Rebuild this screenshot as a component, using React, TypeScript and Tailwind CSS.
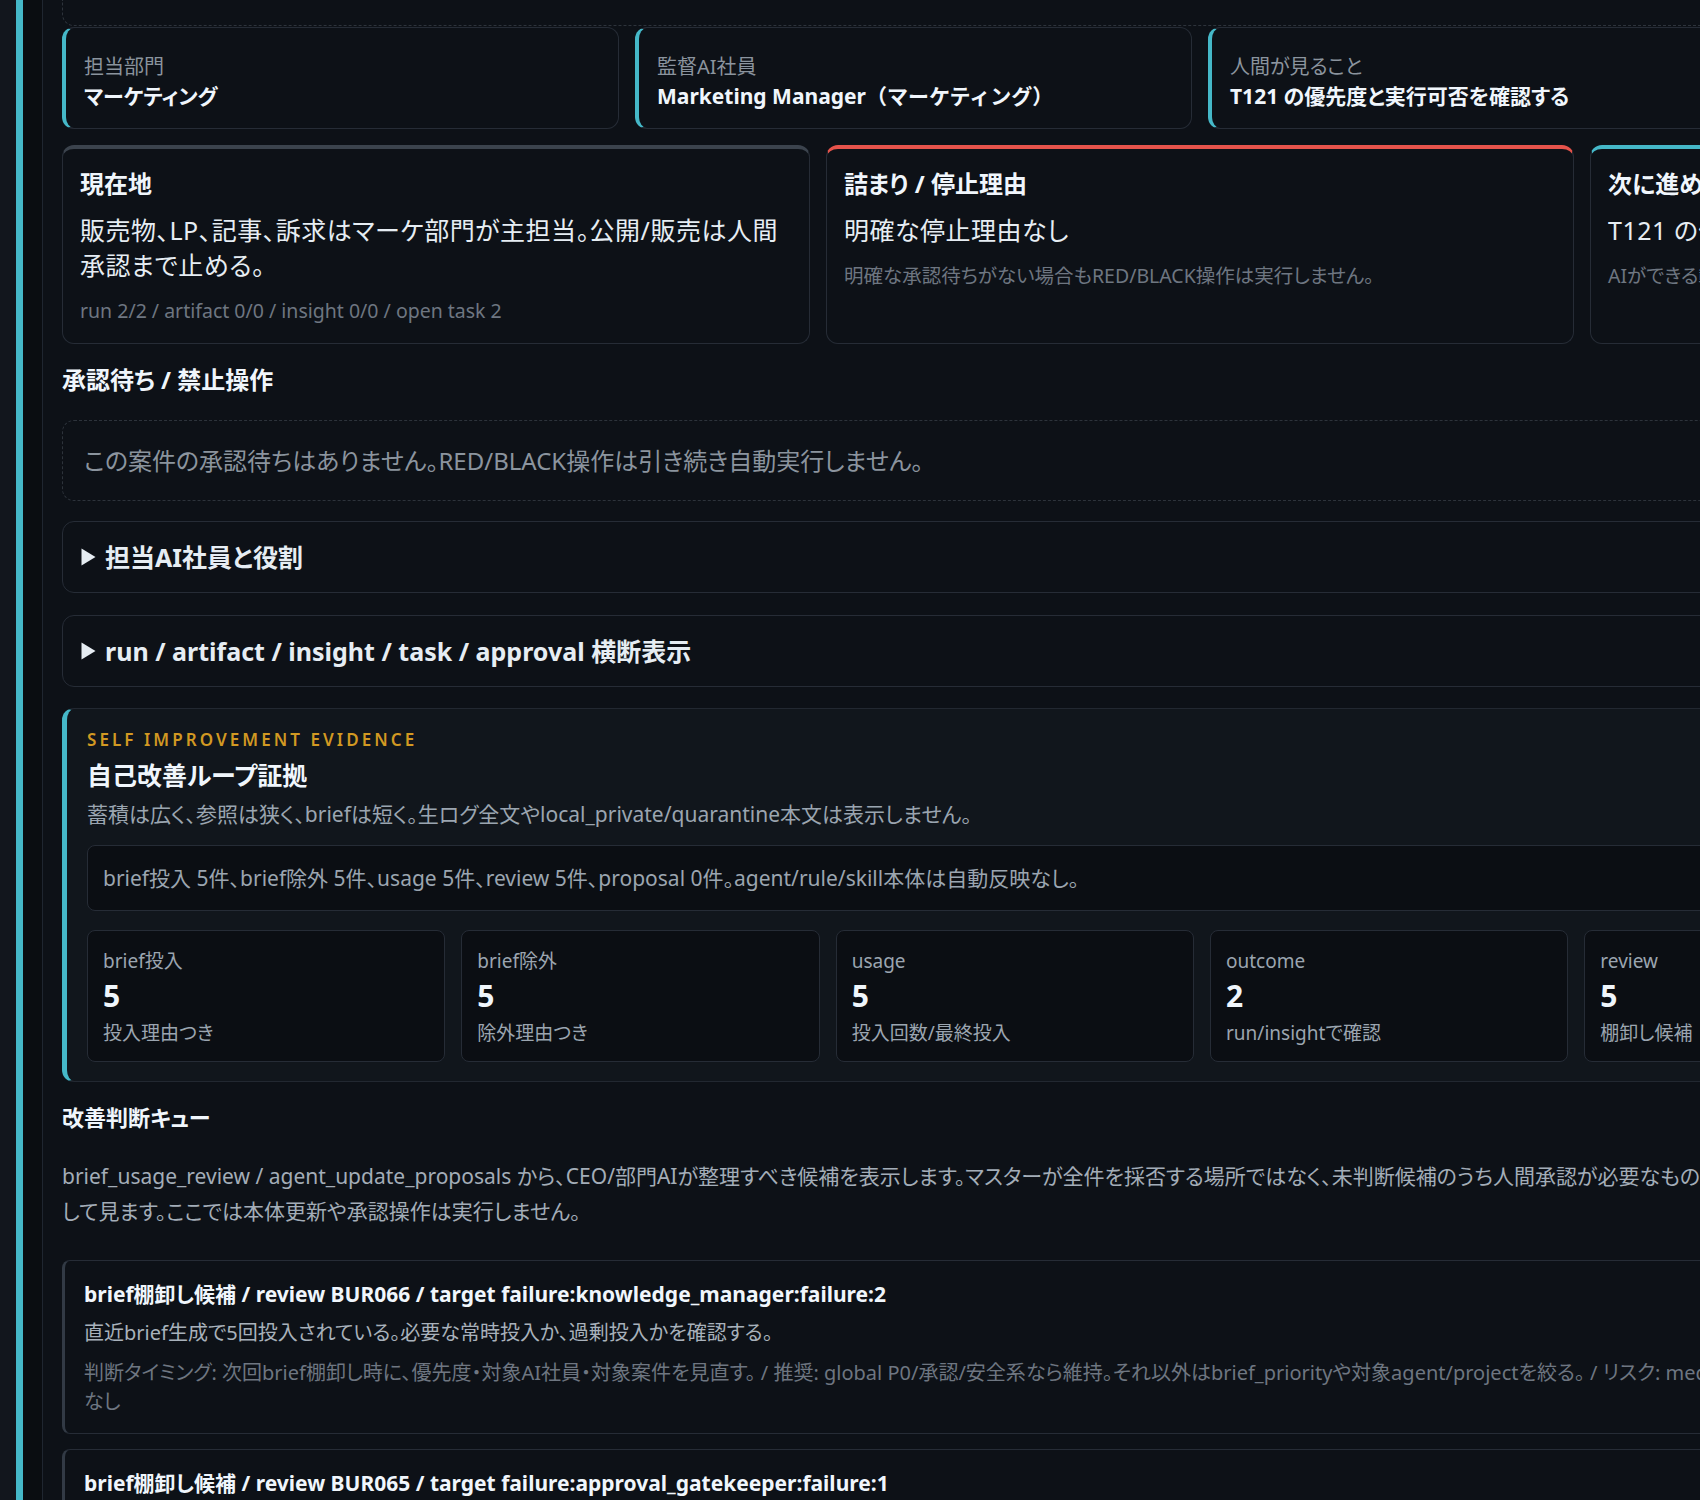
import React from 'react';

type Info = { label: string; value: React.ReactNode };
type Status = { title: string; body: string; meta: string; accent: string };
type Stat = { label: string; value: number; note: string };

const infos: Info[] = [
  { label: '担当部門', value: 'マーケティング' },
  {
    label: '監督AI社員',
    value: (
      <>
        Marketing Manager<span className="[font-feature-settings:normal]">（マーケティング）</span>
      </>
    ),
  },
  { label: '人間が見ること', value: 'T121 の優先度と実行可否を確認する' },
  { label: '次の一手', value: 'brief棚卸しの判断を待つ' },
];

const statuses: Status[] = [
  {
    title: '現在地',
    body: '販売物、LP、記事、訴求はマーケ部門が主担当。公開/販売は人間承認まで止める。',
    meta: 'run 2/2 / artifact 0/0 / insight 0/0 / open task 2',
    accent: 'border-t-[#3b434d]',
  },
  {
    title: '詰まり / 停止理由',
    body: '明確な停止理由なし',
    meta: '明確な承認待ちがない場合もRED/BLACK操作は実行しません。',
    accent: 'border-t-[#e5534b]',
  },
  {
    title: '次に進めるには',
    body: 'T121 の優先度と実行可否を確認する',
    meta: 'AIができる範囲で準備し、公開/販売は承認後に進めます。',
    accent: 'border-t-[#45b8c8]',
  },
];

const stats: Stat[] = [
  { label: 'brief投入', value: 5, note: '投入理由つき' },
  { label: 'brief除外', value: 5, note: '除外理由つき' },
  { label: 'usage', value: 5, note: '投入回数/最終投入' },
  { label: 'outcome', value: 2, note: 'run/insightで確認' },
  { label: 'review', value: 5, note: '棚卸し候補' },
  { label: 'proposal', value: 0, note: '更新提案' },
];

function Caret() {
  return (
    <svg width="15" height="18" viewBox="0 0 15 18" className="shrink-0">
      <polygon points="0.5,0.5 14.5,9 0.5,17.5" fill="#e6edf3" />
    </svg>
  );
}

function Fold({ title, className }: { title: string; className: string }) {
  return (
    <details className={`rounded-xl border border-[#262c36] bg-[#0d1117] ${className}`}>
      <summary className="flex cursor-pointer list-none items-center gap-[9px] px-[18px] py-[18px] text-[25px] font-bold leading-[34px] text-[#e6edf3] [&::-webkit-details-marker]:hidden">
        <Caret />
        <span>{title}</span>
      </summary>
    </details>
  );
}

function QueueItem({ review, target, meta, last }: { review: string; target: string; meta: React.ReactNode; last?: boolean }) {
  return (
    <div className={`rounded-lg border border-[#262c36] border-l-[3px] border-l-[#323a45] bg-[#0d1117] pb-[17px] pl-[19px] pr-5 pt-[18px] ${last ? 'mt-[15px]' : 'mt-[31px]'}`}>
      <div className="text-[21px] font-bold leading-[30px] text-[#f0f6fc]">
        brief棚卸し候補 / review {review} / target {target}
      </div>
      <div className="mt-[9px] text-[20px] leading-[30px] text-[#a8b1bb]">
        直近brief生成で5回投入されている。必要な常時投入か、過剰投入かを確認する。
      </div>
      <div className="mt-[10px] text-[20px] leading-[29px] text-[#6e7681]">{meta}</div>
    </div>
  );
}

export default function App() {
  return (
    <div className="flex h-[1500px] w-[1700px] overflow-hidden bg-[#0d1117] font-['Noto_Sans','Noto_Sans_CJK_JP',sans-serif] [font-feature-settings:'palt']">
      {/* app chrome on the left */}
      <div className="w-[16px] shrink-0 bg-[#12161d]" />
      <div className="w-[7px] shrink-0 bg-[#45b8c8]" />
      <div className="w-[20px] shrink-0 border-r border-[#1f2630] bg-[#0a0d11]" />

      <main className="shrink-0 pl-[19px]">
        <div className="w-[2276px]">
          {/* tail of the previous dashed block */}
          <div className="h-[26px] rounded-b-xl border-x border-b border-dashed border-[#2d333b]" />

          <div className="mt-px grid grid-cols-4 gap-4">
            {infos.map((i) => (
              <div key={i.label} className="h-[102px] rounded-xl border border-[#262c36] border-l-4 border-l-[#45b8c8] pl-[18px] pt-[25px]">
                <div className="text-[20px] leading-[28px] text-[#8b949e]">{i.label}</div>
                <div className="text-[21px] font-bold leading-[30px] text-[#f0f6fc]">{i.value}</div>
              </div>
            ))}
          </div>

          <div className="mt-4 grid grid-cols-3 gap-4">
            {statuses.map((s) => (
              <div key={s.title} className={`h-[199px] rounded-xl border border-[#262c36] border-t-4 px-[17px] pt-[19px] ${s.accent}`}>
                <div className="text-[24px] font-bold leading-[32px] text-[#f0f6fc]">{s.title}</div>
                <div className="mt-[13px] text-[25px] leading-[35px] tracking-[0.02em] text-[#e6edf3]">{s.body}</div>
                <div className="mt-[14px] text-[19.5px] leading-[28px] text-[#6e7681]">{s.meta}</div>
              </div>
            ))}
          </div>

          <h2 className="mt-[21px] text-[24px] font-bold leading-[30px] text-[#f0f6fc]">承認待ち / 禁止操作</h2>
          <div className="mt-[25px] rounded-xl border border-dashed border-[#2d333b] px-[21px] py-[22px] text-[24px] leading-[35px] text-[#8b949e]">
            この案件の承認待ちはありません。RED/BLACK操作は引き続き自動実行しません。
          </div>

          <Fold title="担当AI社員と役割" className="mt-5" />
          <Fold title="run / artifact / insight / task / approval 横断表示" className="mt-[22px]" />

          <section className="mt-[21px] rounded-xl border border-[#222831] border-l-[5px] border-l-[#45b8c8] bg-[#11161c] px-5 pb-[19px] pt-[19px]">
            <div className="text-[17px] font-semibold uppercase leading-[24px] tracking-[0.18em] text-[#d29922]">Self improvement evidence</div>
            <div className="mt-[7px] text-[25px] font-bold leading-[32px] text-[#f0f6fc]">自己改善ループ証拠</div>
            <div className="mt-[9px] text-[21px] leading-[28px] text-[#9ba5b0]">
              蓄積は広く、参照は狭く、briefは短く。生ログ全文やlocal_private/quarantine本文は表示しません。
            </div>
            <div className="mt-[17px] rounded-lg border border-[#262c36] bg-[#0b0e13] px-[15px] py-[17px] text-[21px] leading-[30px] text-[#9ba5b0]">
              brief投入 5件、brief除外 5件、usage 5件、review 5件、proposal 0件。agent/rule/skill本体は自動反映なし。
            </div>
            <div className="mt-[19px] grid grid-cols-6 gap-4">
              {stats.map((s) => (
                <div key={s.label} className="rounded-lg border border-[#262c36] bg-[#0b0e13] px-[15px] pb-[14px] pt-4">
                  <div className="text-[19px] leading-[28px] text-[#9ba5b0]">{s.label}</div>
                  <div className="text-[30px] font-bold leading-[42px] text-[#f0f6fc]">{s.value}</div>
                  <div className="mt-[2px] text-[19px] leading-[28px] text-[#9ba5b0]">{s.note}</div>
                </div>
              ))}
            </div>
          </section>

          <h2 className="mt-[20px] text-[22px] font-bold leading-[30px] text-[#f0f6fc]">改善判断キュー</h2>
          <p className="mt-[27px] text-[21px] leading-[35px] text-[#a3adb8]">
            brief_usage_review / agent_update_proposals から、CEO/部門AIが整理すべき候補を表示します。マスターが全件を採否する場所ではなく、未判断候補のうち人間承認が必要なものだけを、判断材料つきで整理
            <br />
            して見ます。ここでは本体更新や承認操作は実行しません。
          </p>

          <QueueItem
            review="BUR066"
            target="failure:knowledge_manager:failure:2"
            meta={
              <>
                判断タイミング: 次回brief棚卸し時に、優先度・対象AI社員・対象案件を見直す。 / 推奨: global P0/承認/安全系なら維持。それ以外はbrief_priorityや対象agent/projectを絞る。 / リスク: medium / 本体反映: 自動反映
                <br />
                なし
              </>
            }
          />
          <QueueItem
            review="BUR065"
            target="failure:approval_gatekeeper:failure:1"
            last
            meta="判断タイミング: 次回brief棚卸し時に、優先度・対象AI社員・対象案件を見直す。"
          />
        </div>
      </main>
    </div>
  );
}
